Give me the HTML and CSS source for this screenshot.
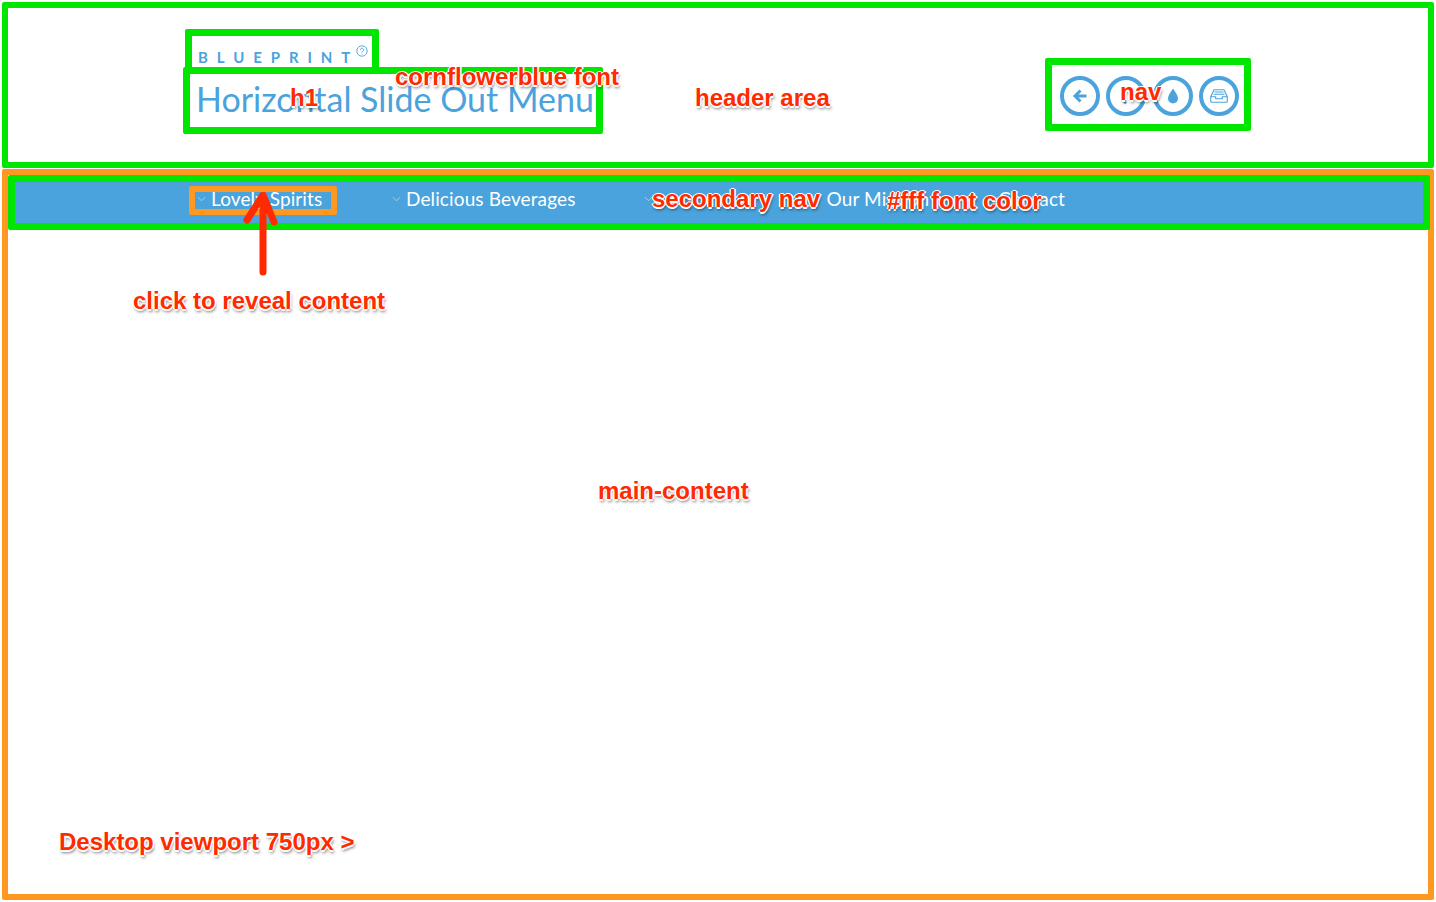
FILE: index.html
```html
<!DOCTYPE html>
<html lang="en">
<head>
<meta charset="utf-8">
<title>Horizontal Slide Out Menu</title>
<link rel="stylesheet" href="styles.css">
</head>
<body>
<div class="page">
  <header class="site-header">
    <div class="titles">
      <div class="brand"><span class="brand-name">BLUEPRINT</span><svg class="help" viewBox="0 0 12 12"><circle cx="6" cy="6" r="5.2"/><path d="M4.4 4.8a1.6 1.6 0 1 1 2.5 1.3c-.6.4-.9.7-.9 1.3"/><path d="M6 8.6v.8"/></svg></div>
      <h1 class="title">Horizontal Slide Out Menu</h1>
    </div>
    <nav class="icon-nav">
      <a class="icon-btn"><svg viewBox="0 0 16 16"><path class="thick" d="M14.500 8H3M8.500 2.500 3 8l5.500 5.500"/></svg></a>
      <a class="icon-btn"><svg viewBox="0 0 16 16"><path class="thick" d="M6 15l2-1.500"/></svg></a>
      <a class="icon-btn"><svg viewBox="0 0 16 16"><path class="fill" d="M8 .5c2.500 4 5 6.800 5 10a5 5 0 0 1-10 0c0-3.200 2.500-6 5-10z"/></svg></a>
      <a class="icon-btn"><svg class="tray" viewBox="0 0 18 14"><path class="thin" d="M4 .7h10l3.300 7v4.600a1 1 0 0 1-1 1H1.700a1 1 0 0 1-1-1V7.700zM.7 7.700h5v2h6.600v-2h5M4.500 3h9M3.500 5.300h11"/></svg></a>
    </nav>
  </header>
  <main class="main-content">
    <nav class="secondary-nav">
      <a class="nav-item nav-active"><svg class="chev" viewBox="0 0 10 6"><path d="M1 1l4 4 4-4"/></svg>Lovely Spirits</a>
      <a class="nav-item nav-2"><svg class="chev" viewBox="0 0 10 6"><path d="M1 1l4 4 4-4"/></svg>Delicious Beverages</a>
      <a class="nav-item nav-3"><svg class="chev" viewBox="0 0 10 6"><path d="M1 1l4 4 4-4"/></svg></a>
      <a class="nav-item nav-4">Our Mission</a>
      <a class="nav-item nav-5">Contact</a>
    </nav>
  </main>
</div>
<span class="note note-font">cornflowerblue font</span>
<span class="note note-h1">h1</span>
<span class="note note-header">header area</span>
<span class="note note-nav">nav</span>
<span class="note note-secondary">secondary nav</span>
<span class="note note-color">#fff font color</span>
<span class="note note-click">click to reveal content</span>
<span class="note note-main">main-content</span>
<span class="note note-desktop">Desktop viewport 750px &gt;</span>
<svg class="arrow" viewBox="0 0 40 90"><path d="M20 80V4M4 28 20 3l11 27"/></svg>
</body>
</html>
```
FILE: styles.css
```css
* { box-sizing: border-box; }
html, body { margin: 0; height: 100%; background: #fff; overflow: hidden; }
body { position: relative; font-family: Lato, sans-serif; color: #4aa3dc; }
.page { padding: 2px 2px 2px; height: 902px; display: flex; flex-direction: column; }
.site-header {
  height: 166px; border: 6px solid #00e600; border-radius: 2px;
  padding: 21px 177px 0 175px; display: flex; justify-content: space-between; align-items: flex-start;
}
.titles { display: flex; flex-direction: column; align-items: flex-start; }
.brand {
  width: 194px; height: 45px; border: 7px solid #00e600; border-radius: 2px; margin-left: 2px;
  padding: 9px 0 0 6px; display: flex; align-items: flex-start;
}
.brand-name { font-size: 15px; font-weight: 700; letter-spacing: 8.900px; line-height: 18px; padding-top: 3px; }
.help { width: 12px; height: 12px; margin: 0 0 0 -3px; fill: none; stroke: #4aa3dc; stroke-width: .9; }
.title {
  margin: -7px 0 0; width: 420px; height: 67px; border: 7px solid #00e600; border-radius: 2px;
  padding: 0 0 0 6px; font-size: 34px; font-weight: 400; line-height: 50px; white-space: nowrap;
}
.icon-nav {
  width: 206px; height: 73px; margin-top: 29px; border: 7px solid #00e600; border-radius: 2px;
  padding: 11px 0 0 8px; display: flex; gap: 6.400px;
}
.icon-btn {
  width: 40px; height: 40px; border: 4px solid #4aa3dc; border-radius: 50%;
  display: flex; align-items: center; justify-content: center;
}
.icon-btn svg { width: 16px; height: 16px; fill: none; stroke: #4aa3dc; }
.icon-btn .tray { width: 18px; height: 14px; }
.thick { stroke-width: 3; }
.fill { fill: #4aa3dc; stroke: none; }
.thin { stroke-width: 1.100; }
.main-content { flex: 1; margin-top: 1px; border: 6px solid #ff9820; border-radius: 2px; padding: 0; }
.secondary-nav {
  height: 55px; margin: 0 -2px 0 0; border: 7px solid #00e600; border-radius: 2px; background: #4aa3dc;
  padding: 0 0 4px 174px; display: flex; align-items: center; color: #fff; font-size: 19px;
}
.nav-item { line-height: 20px; padding-bottom: 4px; display: flex; align-items: center; white-space: nowrap; letter-spacing: .12px; }
.chev { width: 9px; height: 6px; fill: none; stroke: #a9d2ee; stroke-width: 1; margin-right: 5px; }
.nav-active { height: 29px; width: 148px; border: 6px solid #ff9820; border-radius: 2px; padding-left: 2px; }
.nav-2 { margin-left: 55px; }
.nav-3 { margin-left: 68px; }
.nav-4 { margin-left: 169px; }
.nav-5 { margin-left: 69px; }
.note {
  position: absolute; font-family: "Liberation Sans", Arial, sans-serif; font-weight: 700; font-size: 24px; line-height: 28px;
  color: #ff2a00; white-space: nowrap;
  text-shadow: 1.500px 0 #fff, -1.500px 0 #fff, 0 1.500px #fff, 0 -1.500px #fff, 1px 3px 3px rgba(0,0,0,.5);
}
.note-font { left: 395px; top: 63px; }
.note-h1 { left: 290px; top: 84px; }
.note-header { left: 695px; top: 84px; }
.note-nav { left: 1120px; top: 78px; }
.note-secondary { left: 652px; top: 185px; }
.note-color { left: 887px; top: 187px; }
.note-click { left: 133px; top: 287px; }
.note-main { left: 598px; top: 477px; }
.note-desktop { left: 59px; top: 828px; }
.arrow { position: absolute; left: 243px; top: 192px; width: 40px; height: 90px; fill: none; stroke: #ff2a00; stroke-width: 7; stroke-linecap: round; stroke-linejoin: round; }
```
